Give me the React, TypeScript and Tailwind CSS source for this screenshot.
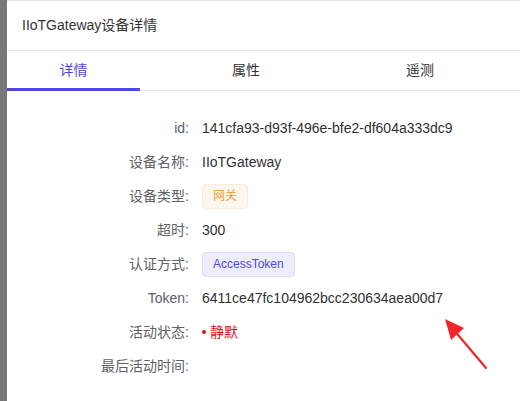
import React from "react";

const rows: { label: string; value: React.ReactNode }[] = [
  { label: "id:", value: "141cfa93-d93f-496e-bfe2-df604a333dc9" },
  { label: "设备名称:", value: "IIoTGateway" },
  {
    label: "设备类型:",
    value: (
      <span className="inline-flex h-[25px] items-center rounded-[4px] border border-[#faecd8] bg-[#fdf6ec] px-[10px] text-[12px] text-[#e6a23c]">
        网关
      </span>
    ),
  },
  { label: "超时:", value: "300" },
  {
    label: "认证方式:",
    value: (
      <span className="inline-flex h-[25px] items-center rounded-[4px] border border-[#dcdcfa] bg-[#ededfd] px-[10px] text-[12px] text-[#5046e4]">
        AccessToken
      </span>
    ),
  },
  { label: "Token:", value: "6411ce47fc104962bcc230634aea00d7" },
  {
    label: "活动状态:",
    value: (
      <span className="flex items-center text-[#e0131f]">
        <span className="mr-[4px] h-[4px] w-[4px] rounded-full bg-[#e0131f]" />
        静默
      </span>
    ),
  },
  { label: "最后活动时间:", value: "" },
];

export default function App() {
  return (
    <div
      className="relative flex h-[401px] w-[520px] overflow-hidden bg-white text-[14px]"
      style={{ fontFamily: '"Liberation Sans", Arial, "Noto Sans CJK SC", sans-serif' }}
    >
      <div className="w-[7px] shrink-0 bg-[#777777]" />
      <div className="flex flex-1 flex-col border-t border-[#e4e4e4]">
        <div className="flex h-[50px] items-center border-b border-[#e4e7ed] px-[15px] text-[#333333]">
          IIoTGateway设备详情
        </div>
        <div className="flex h-[40px] border-b border-[#e4e7ed] text-[#303133]">
          <div className="relative flex w-[133px] items-center justify-center text-[#5046e4]">
            详情
            <div className="absolute bottom-[-1px] left-0 right-0 h-[3px] bg-[#5046e4]" />
          </div>
          <div className="flex w-[212px] items-center justify-center">属性</div>
          <div className="flex w-[136px] items-center justify-center">遥测</div>
        </div>
        <div className="flex flex-col pt-[20px]">
          {rows.map((r) => (
            <div key={r.label} className="flex h-[34px] items-center">
              <div className="w-[182px] text-right text-[#606266]">{r.label}</div>
              <div className="ml-[13px] text-[#303133]">{r.value}</div>
            </div>
          ))}
        </div>
      </div>
      <svg className="absolute left-[438px] top-[313px]" width="54" height="60" viewBox="0 0 54 60">
        <line x1="48" y1="55" x2="15" y2="16" stroke="#f0262b" strokeWidth="2.2" strokeLinecap="round" />
        <polygon points="7,6 26,15 13,27" fill="#f0262b" />
      </svg>
    </div>
  );
}
